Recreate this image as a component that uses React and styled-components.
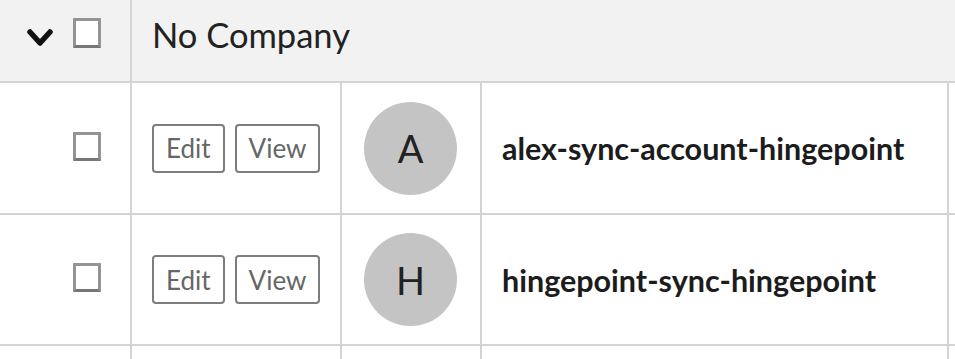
import React from 'react';
import styled, { createGlobalStyle } from 'styled-components';

const GlobalStyle = createGlobalStyle`
  html, body {
    margin: 0;
    padding: 0;
    background: #fff;
  }
  body {
    font-family: Lato, "Open Sans", sans-serif;
    overflow: hidden;
  }
`

const Grid = styled.div`
  display: grid;
  grid-template-columns: 130px 208px 138px 465px 1fr;
  grid-template-rows: 81px 130px 129px 40px;
  gap: 2px;
  background: #d4d4d4;
  width: 100%;
  height: 359px;
  overflow: hidden;
`

const GroupToggleCell = styled.div`
  background: #f2f2f2;
  display: flex;
  align-items: flex-start;
  padding: 18px 0 0 27px;
  gap: 20px;
`

const GroupTitleCell = styled.div`
  grid-column: 2 / -1;
  background: #f2f2f2;
  padding: 15px 0 0 20px;
  font-size: 34.5px;
  line-height: 40px;
  color: #222;
`

const Chevron = styled.svg`
  margin-top: 10px;
  width: 26px;
  height: 20px;
`

const Checkbox = styled.span`
  display: block;
  box-sizing: border-box;
  width: 28px;
  height: ${p => (p.$header ? 30 : 29)}px;
  border: 3px solid #949494;
  border-bottom-color: #777;
  border-radius: 1px;
  background: #fff;
`

const Cell = styled.div`
  background: #fff;
  display: flex;
  align-items: center;
  padding-left: ${p => p.$pad || 20}px;
  padding-bottom: ${p => p.$lift || 0}px;
  box-sizing: border-box;
`

const Actions = styled.div`
  display: flex;
  gap: 10px;
`

const ActionButton = styled.button`
  box-sizing: border-box;
  height: 49px;
  padding: 0 12px;
  border: 2px solid #7d7d7d;
  border-radius: 4px;
  background: #fff;
  color: #666;
  font-family: Lato, "Open Sans", sans-serif;
  font-size: 26px;
  line-height: 1;
  cursor: pointer;
`

const Avatar = styled.div`
  width: 93px;
  height: 93px;
  border-radius: 50%;
  background: #c4c4c4;
  color: #222;
  display: flex;
  align-items: center;
  justify-content: center;
  font-size: 38px;
`

const Name = styled.div`
  font-weight: 700;
  font-size: 30.5px;
  color: #1c1c1c;
`

const accounts = [
  { id: 1, name: 'alex-sync-account-hingepoint' },
  { id: 2, name: 'hingepoint-sync-hingepoint' },
]

function AccountRow({ name }) {
  return (
    <>
      <Cell $pad={73} $lift={4}>
        <Checkbox />
      </Cell>
      <Cell>
        <Actions>
          <ActionButton>Edit</ActionButton>
          <ActionButton>View</ActionButton>
        </Actions>
      </Cell>
      <Cell $pad={22}>
        <Avatar>{name.charAt(0).toUpperCase()}</Avatar>
      </Cell>
      <Cell>
        <Name>{name}</Name>
      </Cell>
      <Cell />
    </>
  )
}

export default function App() {
  return (
    <>
      <GlobalStyle />
      <Grid>
        <GroupToggleCell>
          <Chevron viewBox="0 0 26 20">
            <path d="M3 4 L13 15 L23 4" fill="none" stroke="#111" strokeWidth="5.5" strokeLinecap="round" strokeLinejoin="round" />
          </Chevron>
          <Checkbox $header />
        </GroupToggleCell>
        <GroupTitleCell>No Company</GroupTitleCell>
        {accounts.map(a => (
          <AccountRow key={a.id} name={a.name} />
        ))}
        <Cell />
        <Cell />
        <Cell />
        <Cell />
        <Cell />
      </Grid>
    </>
  )
}
